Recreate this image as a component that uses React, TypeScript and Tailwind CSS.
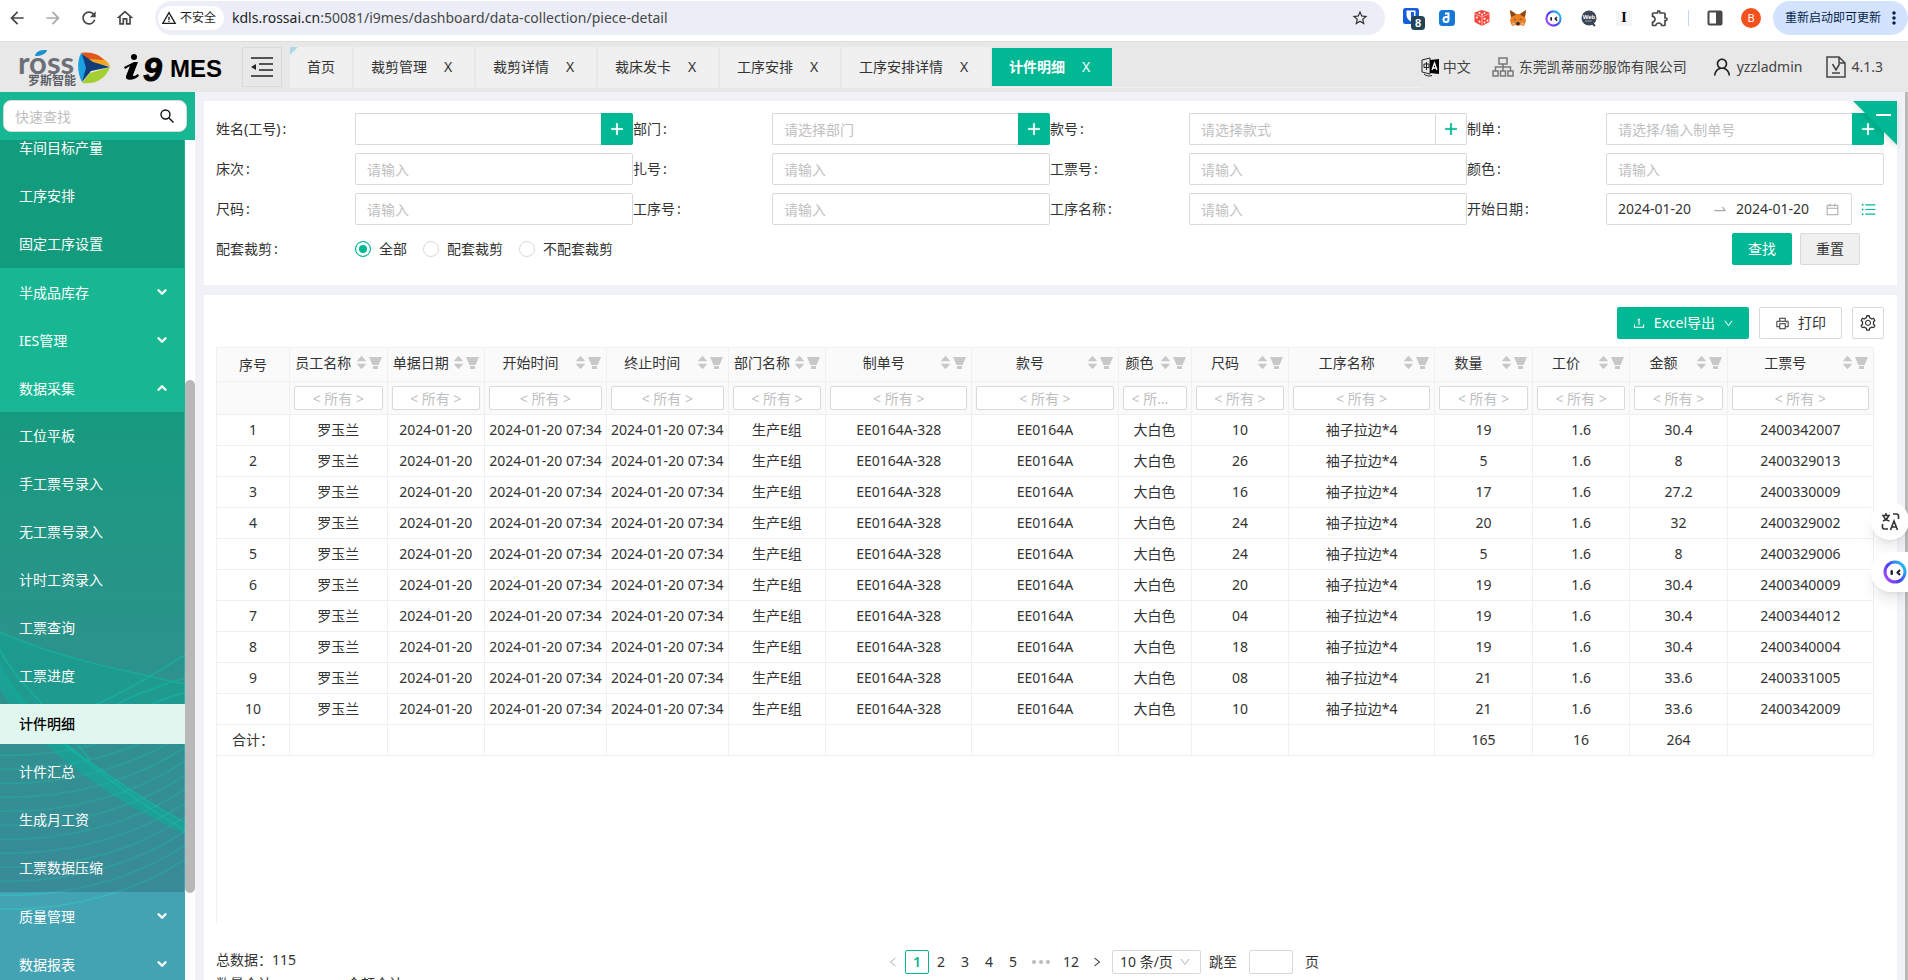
import React, { useId, useState } from 'react';
import clsx from 'clsx';
import {
    AiFillCaretDown,
    AiFillCaretUp,
    AiOutlineCalendar,
    AiOutlineDown,
    AiOutlineLeft,
    AiOutlinePlus,
    AiOutlinePrinter,
    AiOutlineRight,
    AiOutlineSetting,
    AiOutlineSwapRight,
    AiOutlineUnorderedList,
    AiOutlineUpload,
    AiOutlineUser,
} from 'react-icons/ai';
import { MdArrowBack, MdArrowForward, MdMoreVert, MdOutlineExtension, MdOutlineHome, MdRefresh, MdStarBorder, MdWarningAmber } from 'react-icons/md';
import { ChevronDown, ChevronUp } from 'lucide-react';

interface MenuItem {
    title: string;
    open?: boolean;
    children?: string[];
}

interface Column {
    title: string;
    width: string;
}

const TABS = ['首页', '裁剪管理', '裁剪详情', '裁床发卡', '工序安排', '工序安排详情', '计件明细'];

const MENU: MenuItem[] = [
    { title: '半成品库存' },
    { title: 'IES管理' },
    {
        title: '数据采集',
        open: true,
        children: ['工位平板', '手工票号录入', '无工票号录入', '计时工资录入', '工票查询', '工票进度', '计件明细', '计件汇总', '生成月工资', '工票数据压缩'],
    },
    { title: '质量管理' },
    { title: '数据报表' },
];

const COLUMNS: Column[] = [
    { title: '员工名称', width: 'w-[80px]' },
    { title: '单据日期', width: 'w-[80px]' },
    { title: '开始时间', width: 'w-[100px]' },
    { title: '终止时间', width: 'w-[100px]' },
    { title: '部门名称', width: 'w-[80px]' },
    { title: '制单号', width: 'w-[120px]' },
    { title: '款号', width: 'w-[120px]' },
    { title: '颜色', width: 'w-[60px]' },
    { title: '尺码', width: 'w-[80px]' },
    { title: '工序名称', width: 'w-[120px]' },
    { title: '数量', width: 'w-[80px]' },
    { title: '工价', width: 'w-[80px]' },
    { title: '金额', width: 'w-[80px]' },
    { title: '工票号', width: 'w-[120px]' },
];

// size, quantity, amount, ticket number
const RECORDS = [
    ['10', '19', '30.4', '2400342007'],
    ['26', '5', '8', '2400329013'],
    ['16', '17', '27.2', '2400330009'],
    ['24', '20', '32', '2400329002'],
    ['24', '5', '8', '2400329006'],
    ['20', '19', '30.4', '2400340009'],
    ['04', '19', '30.4', '2400344012'],
    ['18', '19', '30.4', '2400340004'],
    ['08', '21', '33.6', '2400331005'],
    ['10', '21', '33.6', '2400342009'],
];

const ROWS = RECORDS.map(([size, qty, amount, ticket]) => [
    '罗玉兰', '2024-01-20', '2024-01-20 07:34', '2024-01-20 07:34', '生产E组', 'EE0164A-328', 'EE0164A', '大白色',
    size, '袖子拉边*4', qty, '1.6', amount, ticket,
]);

const TOTALS = ['', '', '', '', '', '', '', '', '', '', '165', '16', '264', ''];

const RobotIcon = ({ size }: { size: number }) => (
    <svg width={size} height={size} viewBox="0 0 24 24">
        <defs>
            <linearGradient id={`ring${size}`} x1="0" y1="1" x2="1" y2="0.3">
                <stop offset="0" stopColor="#c04dff" />
                <stop offset="0.5" stopColor="#4a3df5" />
                <stop offset="1" stopColor="#27b9ee" />
            </linearGradient>
        </defs>
        <circle cx="12" cy="12" r="10" fill="#fff" stroke={`url(#ring${size})`} strokeWidth="3" />
        <rect x="7.5" y="10" width="2.4" height="5" rx="1" fill="#1b1b2a" />
        <path d="M17 10l-2.500 2.500 2.500 2.500" fill="none" stroke="#1b1b2a" strokeWidth="2" />
    </svg>
);

const Extensions = () => (
    <div className="flex items-center gap-[18px] pl-[18px]">
        <svg width="22" height="24" viewBox="0 0 22 24">
            <rect x="0" y="2" width="16" height="16" rx="2.5" fill="#175ddc" />
            <path d="M3.5 4.5h9v5c0 3-2.5 5-4.500 6-2-1-4.500-3-4.500-6z" fill="#fff" />
            <path d="M8 6h3v3.500c0 2-1.500 3.200-3 4z" fill="#175ddc" />
            <rect x="8" y="10" width="14" height="14" rx="3.5" fill="#254453" />
            <text x="15" y="21" textAnchor="middle" fontSize="11" fontWeight="700" fill="#fff" fontFamily="Liberation Sans">8</text>
        </svg>
        <svg className="-ml-1" width="16" height="16" viewBox="0 0 16 16">
            <rect width="16" height="16" rx="3.5" fill="#1478d4" />
            <path d="M6 3.500h3.500v6a2.500 2.500 0 1 1-2.500-2.500h2" fill="none" stroke="#fff" strokeWidth="2" />
        </svg>
        <svg width="18" height="18" viewBox="0 0 18 18">
            <path d="M9 1l7.500 2.500v9.500L9 17l-7.500-4V3.500z" fill="#f5473c" />
            <path d="M1.500 4.500L9 8l7.500-3.500M9 8v9" stroke="#ffd8d4" strokeWidth="0.700" fill="none" />
            <g fill="#fff">
                <circle cx="6.500" cy="4" r="0.900" /><circle cx="11.500" cy="4" r="0.900" /><circle cx="9" cy="5.500" r="0.900" />
                <circle cx="4" cy="8.500" r="1" /><circle cx="6.500" cy="12.500" r="1" />
                <circle cx="11.500" cy="9.800" r="1" /><circle cx="14.500" cy="11.500" r="1" /><circle cx="11.500" cy="13.500" r="0.900" />
            </g>
        </svg>
        <svg width="18" height="18" viewBox="0 0 18 18">
            <path d="M1 1l6 4h4l6-4-1 7 1 4-2 5-4-1-1 1H8l-1-1-4 1-2-5 1-4z" fill="#ec7f24" />
            <path d="M1 1l6 4-2 2-3 1zM17 1l-6 4 2 2 3 1z" fill="#8a4718" />
            <path d="M5 9.500l2.500 1.500-2-.2zM13 9.500L10.500 11l2-.2z" fill="#233447" />
            <path d="M7 15l1-2h2l1 2-1 1H8z" fill="#233447" />
            <path d="M3.500 13l3 2-3 1zM14.500 13l-3 2 3 1z" fill="#d7c1b3" />
        </svg>
        <RobotIcon size={17} />
        <svg width="18" height="18" viewBox="0 0 18 18">
            <circle cx="9" cy="9" r="7.500" fill="#3d4654" />
            <text x="9" y="10" textAnchor="middle" fontSize="6" fontWeight="700" fill="#fff" fontFamily="Liberation Sans">Web</text>
            <path d="M5 12h7" stroke="#8fa3c0" />
            <path d="M11 13l4 4" stroke="#3d4654" strokeWidth="2" />
        </svg>
        <span className="w-[16px] h-[16px] bg-[#f5f5f5] flex items-center justify-center font-['Liberation_Serif',serif] font-bold text-[14px] leading-[16px] text-black">I</span>
        <MdOutlineExtension size={20} className="text-[#474747]" />
        <span className="w-px h-4 bg-[#c2d7fb]" />
        <svg width="16" height="16" viewBox="0 0 16 16">
            <rect x="1.500" y="1.500" width="13" height="13" rx="1" fill="none" stroke="#474747" strokeWidth="2" />
            <rect x="9" y="2" width="6" height="12" fill="#474747" />
        </svg>
        <span className="w-5 h-5 rounded-full bg-[#f4511e] text-white text-[11px] leading-5 text-center">B</span>
    </div>
);

const BrowserBar = () => (
    <div className="h-[41px] shrink-0 bg-white flex items-start pt-px">
        <div className="h-[34px] w-[155px] shrink-0 flex items-center gap-4 pl-[7px] text-[#474747]">
            <button title="后退"><MdArrowBack size={20} /></button>
            <button title="前进" className="text-[#a9a9a9]"><MdArrowForward size={20} /></button>
            <button title="刷新"><MdRefresh size={20} /></button>
            <button title="主页"><MdOutlineHome size={20} /></button>
        </div>
        <div className="h-[34px] flex-1 rounded-full bg-[#ebeef7] flex items-center pl-[3px] pr-4">
            <span className="h-6 rounded-full bg-white flex items-center gap-[3px] pl-[3px] pr-2 text-[12px] leading-[16px] text-[#1f1f1f]">
                <MdWarningAmber size={16} />不安全
            </span>
            <span className="flex-1 pl-2 text-[14px] leading-[20px] text-[#474747]">
                <span className="text-[#1f1f1f]">kdls.rossai.cn</span>:50081/i9mes/dashboard/data-collection/piece-detail
            </span>
            <MdStarBorder size={18} className="text-[#333]" />
        </div>
        <div className="h-[34px] flex items-center">
            <Extensions />
        </div>
        <button className="ml-3 h-[34px] rounded-full bg-[#d3e3fd] flex items-center pl-3 pr-1 text-[12px] leading-[16px] text-[#041e49]">
            重新启动即可更新<MdMoreVert size={20} className="ml-[3px]" />
        </button>
    </div>
);

const Logo = () => (
    <svg className="shrink-0" width="224" height="50" viewBox="0 0 224 50">
        <text x="18" y="32" fontSize="31" fontWeight="700" fill="#6c6f76" fontFamily="Lato">ross</text>
        <path d="M35 14c1-5 5-6 12-6-1 4-6 6-12 6z" fill="#1a8fd1" />
        <text x="28" y="43" fontSize="12" fontWeight="700" fill="#5b5e66" fontFamily="Noto Sans CJK SC">罗斯智能</text>
        <path d="M81 11c2-2 24 2 29 13L93 21z" fill="#f5a623" />
        <path d="M81 11c9-2 18 1 23 7L88 17z" fill="#e0561d" />
        <path d="M81 11c-4 8-4 20 1 29l7-19z" fill="#1ba0e2" />
        <path d="M82 41c14 2 24-5 28-16L90 31z" fill="#a4cf30" />
        <path d="M82 12l11 8 17 5-19 4-9 11 4-14z" fill="#123c78" />
        <circle cx="134" cy="15" r="3" fill="#000" />
        <path d="M124 25l10-5h4l-5 13c0 2 2 1 5-1l1 2c-4 4-14 6-13 0l4-10-5 3z" fill="#000" />
        <text x="143" y="39" fontSize="34" fontWeight="700" fontStyle="italic" fill="#000" stroke="#000" fontFamily="Liberation Sans">9</text>
        <text x="170" y="35" fontSize="24" fontWeight="700" fill="#000" fontFamily="Liberation Sans">MES</text>
    </svg>
);

const Header = () => (
    <header className="h-[51px] shrink-0 bg-[#e8e8e8] border-t border-[#dedede] flex items-center pr-[25px]">
        <Logo />
        <button title="收起菜单" className="ml-[18px] w-10 h-10 shrink-0 border border-[#d9d9d9] flex items-center justify-center">
            <svg width="24" height="22" viewBox="0 0 24 22" stroke="#222" strokeWidth="1.500">
                <path d="M1 2h22M9 8h14M9 14h14M1 20h22" />
                <path d="M6 8v6l-5-3z" fill="#222" stroke="none" />
            </svg>
        </button>
        <nav className="ml-2 flex-1 flex items-center gap-[2px] border-b border-[#f0f0f0]">
            {TABS.map((tab, i) => {
                const active = i === TABS.length - 1;
                return (
                    <div
                        key={tab}
                        className={clsx(
                            'relative flex items-center px-[17px] text-[14px] leading-[20px]',
                            active ? 'h-[38px] bg-[#00b894] text-white font-bold' : 'h-10 bg-[#f0f0f0] text-[#333]'
                        )}
                    >
                        {i === 0 && <span className="absolute left-0 top-0 border-t-8 border-r-8 border-t-[#add8e6] border-r-transparent" />}
                        <a href="#">{tab}</a>
                        {i > 0 && <button title="关闭" className="ml-4 mr-1 w-[10px] font-normal">X</button>}
                    </div>
                );
            })}
        </nav>
        <div className="flex items-center text-[14px] leading-[20px] text-[#444] whitespace-nowrap">
            <svg className="mr-[3px]" width="19" height="20" viewBox="0 0 19 20">
                <path d="M1 3l8-2v16l-8-2z" fill="none" stroke="#222" />
                <path d="M3 7h5v3.500H3zM5.500 5v8" fill="none" stroke="#222" />
                <path d="M9 3l9-1v15l-9-1z" fill="#000" />
                <path d="M11 13l2.500-7L16 13M12 11h3" fill="none" stroke="#fff" strokeWidth="1.300" />
                <path d="M3 17c2 2 5 2.500 8 1.500" fill="none" stroke="#222" />
            </svg>
            <span>中文</span>
            <svg className="ml-[21px] mr-[5px]" width="22" height="20" viewBox="0 0 22 20" fill="none" stroke="#777" strokeWidth="1.500">
                <path d="M7 1h8v6H7zM1 14h5v5H1zM8.500 14h5v5h-5zM16 14h5v5h-5zM11 7v7M3.500 14v-4h15v4" />
            </svg>
            <span>东莞凯蒂丽莎服饰有限公司</span>
            <AiOutlineUser size={22} className="ml-6 mr-1 text-[#222]" />
            <span>yzzladmin</span>
            <svg className="ml-6 mr-[5px]" width="20" height="22" viewBox="0 0 20 22" fill="none" stroke="#444" strokeWidth="1.500">
                <path d="M1 1h12l6 6v14H1zM13 1v6h6M6.500 8l3.500 6 3.500-6M6 17h8" />
            </svg>
            <span>4.1.3</span>
        </div>
    </header>
);

const SidebarWaves = () => (
    <svg className="absolute bottom-0 left-0 w-full h-[380px]" viewBox="0 0 185 380" preserveAspectRatio="none" fill="none">
        <path d="M0 32C50 55 110 68 185 84V104H20C10 90 4 78 0 60z" fill="#10c4ac" opacity="0.45" />
        <path d="M0 62C20 110 90 170 185 222V234C90 190 20 130 0 88z" fill="#12c9b6" opacity="0.6" />
        <g stroke="#1ad6c0" strokeWidth="1.500" opacity="0.7">
            <path d="M0 32C50 55 110 68 185 84" />
            <path d="M95 105C130 90 160 70 185 55" />
            <path d="M115 105C140 92 165 84 185 78" />
            <path d="M150 105C165 98 178 95 185 92" />
            <path d="M40 125C90 165 140 205 185 230" />
            <path d="M60 140C100 170 150 205 185 222" />
            <path d="M0 50C15 80 60 120 90 160" />
        </g>
        <g stroke="#2fd0c4" strokeWidth="2" opacity="0.4">
            {[0, 1, 2, 3, 4, 5, 6, 7, 8, 9, 10, 11].map((n) => (
                <path key={n} transform={`translate(0 ${n * 14})`} d="M0 155C60 157 130 142 185 105" />
            ))}
        </g>
    </svg>
);

const SubMenu = ({ items }: { items: string[] }) => (
    <ul className="mr-px bg-black/15">
        {items.map((item) => (
            <li key={item} className="py-1 -mr-px">
                <a
                    href="#"
                    className={clsx('block h-10 pl-[19px] leading-[40px]', item === '计件明细' && 'bg-[#e0f7ef] text-black font-medium')}
                >
                    {item}
                </a>
            </li>
        ))}
    </ul>
);

const Sidebar = () => (
    <aside className="w-[195px] shrink-0 flex flex-col">
        <div className="h-12 shrink-0 bg-[#17b794] pl-[3px] pr-2 flex items-center">
            <label className="h-8 w-full rounded-lg border border-[#d9d9d9] bg-white flex items-center pl-[11px] pr-3">
                <input aria-label="快速查找" placeholder="快速查找" className="flex-1 min-w-0 outline-none text-[14px] placeholder:text-[#bfbfbf]" />
                <svg width="14" height="14" viewBox="0 0 14 14" fill="none" stroke="#111" strokeWidth="1.400">
                    <circle cx="5.500" cy="5.500" r="4.500" />
                    <path d="M9 9l4.500 4.500" />
                </svg>
            </label>
        </div>
        <div className="flex-1 min-h-0 flex">
            <nav className="relative w-[185px] overflow-hidden bg-linear-to-b from-[#17b794] from-30% to-[#43a3b3] to-90% text-white text-[14px]">
                <SidebarWaves />
                <div className="relative -mt-4">
                    <SubMenu items={['车间目标产量', '工序安排', '固定工序设置']} />
                    {MENU.map((item) => (
                        <React.Fragment key={item.title}>
                            <button className="w-full h-12 pl-[19px] pr-4 flex items-center justify-between text-left">
                                {item.title}
                                {item.open ? <ChevronUp size={14} strokeWidth={4} /> : <ChevronDown size={14} strokeWidth={4} />}
                            </button>
                            {item.children && <SubMenu items={item.children} />}
                        </React.Fragment>
                    ))}
                </div>
            </nav>
            <div className="w-[10px] bg-white pt-[240px]">
                <div className="h-[513px] rounded-full bg-[#b8b8b8]" />
            </div>
        </div>
    </aside>
);

interface FieldProps {
    label: string;
    placeholder?: string;
    plus?: 'solid' | 'outline';
}

const Field: React.FC<FieldProps> = ({ label, placeholder = '请输入', plus }) => {
    const id = useId();
    return (
        <div className="grid grid-cols-3 items-center">
            <label htmlFor={id}>{label}<span className="ml-[2px]">:</span></label>
            <div className="col-span-2 flex">
                <input
                    id={id}
                    placeholder={placeholder}
                    className={clsx(
                        'h-8 flex-1 min-w-0 border border-[#d9d9d9] bg-white px-[11px] outline-none placeholder:text-[#bfbfbf]',
                        plus ? 'rounded-l-xs border-r-0' : 'rounded-xs'
                    )}
                />
                {plus && (
                    <button
                        type="button"
                        title="选择"
                        className={clsx(
                            'h-8 w-8 rounded-r-xs flex items-center justify-center',
                            plus === 'solid' ? 'bg-[#00b894] text-white' : 'border border-[#d9d9d9] bg-white text-[#00b894]'
                        )}
                    >
                        <AiOutlinePlus size={16} stroke="currentColor" strokeWidth={50} />
                    </button>
                )}
            </div>
        </div>
    );
};

const SearchForm = () => {
    const [cutting, setCutting] = useState('全部');

    return (
        <form className="relative shrink-0 bg-white pl-3 pr-[13px] pt-3 pb-5 text-[14px] leading-[20px] text-[#333]" onSubmit={(e) => e.preventDefault()}>
            <div className="grid grid-cols-4 gap-y-2">
                <Field label="姓名(工号)" placeholder="" plus="solid" />
                <Field label="部门" placeholder="请选择部门" plus="solid" />
                <Field label="款号" placeholder="请选择款式" plus="outline" />
                <Field label="制单" placeholder="请选择/输入制单号" plus="solid" />
                <Field label="床次" />
                <Field label="扎号" />
                <Field label="工票号" />
                <Field label="颜色" />
                <Field label="尺码" />
                <Field label="工序号" />
                <Field label="工序名称" />
                <div className="grid grid-cols-3 items-center">
                    <label htmlFor="date-start">开始日期<span className="ml-[2px]">:</span></label>
                    <div className="col-span-2 flex items-center">
                        <div className="h-8 flex-1 min-w-0 rounded-xs border border-[#d9d9d9] px-[11px] flex items-center">
                            <input id="date-start" defaultValue="2024-01-20" className="flex-1 min-w-0 outline-none" />
                            <AiOutlineSwapRight size={16} className="mx-2 text-[#aaa]" />
                            <input aria-label="结束日期" defaultValue="2024-01-20" className="w-[89px] outline-none" />
                            <AiOutlineCalendar size={15} className="text-[#aaa]" />
                        </div>
                        <button type="button" title="快捷选择" className="w-8 flex justify-center text-[#00b894]"><AiOutlineUnorderedList size={17} /></button>
                    </div>
                </div>
                <fieldset className="col-span-3 grid grid-cols-9 items-center">
                    <span>配套裁剪<span className="ml-[2px]">:</span></span>
                    <div className="col-span-8 flex items-center gap-4">
                        {['全部', '配套裁剪', '不配套裁剪'].map((name) => (
                            <label key={name} className="flex items-center gap-2">
                                <input
                                    type="radio"
                                    name="cutting"
                                    checked={cutting === name}
                                    onChange={() => setCutting(name)}
                                    className="appearance-none w-4 h-4 rounded-full border border-[#d9d9d9] checked:border-[#00b894] checked:bg-[#00b894] checked:shadow-[inset_0_0_0_3px_#fff]"
                                />
                                {name}
                            </label>
                        ))}
                    </div>
                </fieldset>
                <div className="flex justify-end gap-2 pr-6">
                    <button className="w-[60px] h-8 rounded-xs bg-[#00b894] text-white">查找</button>
                    <button type="reset" className="w-[60px] h-8 rounded-xs border border-[#d9d9d9] bg-[#f0f0f0]">重置</button>
                </div>
            </div>
            <button type="button" title="收起" className="absolute right-0 top-0 drop-shadow-md">
                <svg width="44" height="44" viewBox="0 0 44 44">
                    <path d="M0 0h44v44z" fill="#00b894" />
                    <path d="M23 14h15" stroke="#fff" strokeWidth="2" />
                </svg>
            </button>
        </form>
    );
};

const PieceTable = () => (
    <table className="w-full table-fixed border-collapse text-[14px] leading-[20px] text-[#333] [&_td]:border [&_td]:border-[#f0f0f0] [&_th]:border [&_th]:border-[#f0f0f0]">
        <colgroup>
            <col className="w-[60px]" />
            {COLUMNS.map((col) => <col key={col.title} className={col.width} />)}
        </colgroup>
        <thead className="bg-[#fafafa]">
            <tr className="h-[34px]">
                <th className="p-0 font-normal">序号</th>
                {COLUMNS.map((col) => (
                    <th key={col.title} className="p-0 font-normal">
                        <div className="flex items-center pl-[2px] pr-[5px] pb-1">
                            <span className="flex-1 whitespace-nowrap">{col.title}</span>
                            <span className="mr-px flex flex-col items-center text-[#c8c8c8]">
                                <AiFillCaretUp size={13} className="-mb-[3px]" />
                                <AiFillCaretDown size={13} className="-mt-[2px]" />
                            </span>
                            <svg width="13" height="14" viewBox="0 0 13 14" fill="#c8c8c8">
                                <path d="M0 1h13L9.500 9h-6z" />
                                <path d="M4 10h5v3H4z" />
                            </svg>
                        </div>
                    </th>
                ))}
            </tr>
            <tr className="h-[33px]">
                <td className="p-0" />
                {COLUMNS.map((col) => (
                    <td key={col.title} className="py-0 px-1">
                        <input
                            aria-label={col.title}
                            placeholder="< 所有 >"
                            className="block w-full h-6 rounded-xs border border-[#d9d9d9] bg-white px-2 text-center text-ellipsis outline-none placeholder:text-[#bfbfbf]"
                        />
                    </td>
                ))}
            </tr>
        </thead>
        <tbody className="text-center">
            {ROWS.map((row, i) => (
                <tr key={i} className="h-[31px]">
                    <td className="p-0">{i + 1}</td>
                    {row.map((cell, j) => <td key={j} className="p-0 whitespace-nowrap">{cell}</td>)}
                </tr>
            ))}
        </tbody>
        <tfoot className="text-center">
            <tr className="h-[31px]">
                <td className="p-0">合计：</td>
                {TOTALS.map((cell, j) => <td key={j} className="p-0">{cell}</td>)}
            </tr>
        </tfoot>
    </table>
);

const Pagination = () => (
    <div className="h-6 flex items-center">
        <button title="上一页" className="w-6 flex justify-center text-[#bbb]"><AiOutlineLeft size={12} /></button>
        {[1, 2, 3, 4, 5].map((page) => (
            <button
                key={page}
                className={clsx('w-6 h-6 leading-[22px]', page === 1 && 'rounded-xs border border-[#00b894] text-[#00b894] font-semibold')}
            >
                {page}
            </button>
        ))}
        <span className="w-8 flex justify-center gap-[3px]">
            <i className="w-1 h-1 rounded-full bg-[#bbb]" />
            <i className="w-1 h-1 rounded-full bg-[#bbb]" />
            <i className="w-1 h-1 rounded-full bg-[#bbb]" />
        </span>
        <button className="w-7">12</button>
        <button title="下一页" className="w-6 flex justify-center"><AiOutlineRight size={12} /></button>
        <div className="relative ml-[3px]">
            <select aria-label="每页条数" className="appearance-none block w-[89px] h-6 rounded-xs border border-[#d9d9d9] bg-white pl-[7px] outline-none">
                <option>10 条/页</option>
            </select>
            <AiOutlineDown size={12} className="absolute right-[10px] top-[6px] text-[#bbb] pointer-events-none" />
        </div>
        <label className="ml-2 flex items-center">
            跳至
            <input className="mx-3 w-11 h-6 rounded-xs border border-[#d9d9d9] outline-none" />
            页
        </label>
    </div>
);

const FloatingTools = () => (
    <div className="absolute right-0 top-[410px] flex flex-col items-end gap-3">
        <button title="翻译" className="w-[38px] h-[38px] -mr-px rounded-full bg-white shadow-lg flex items-center justify-center">
            <svg width="19" height="19" viewBox="0 0 19 19" fill="none" stroke="#333" strokeWidth="1.600">
                <path d="M1 3.500h8M5 1v2.500M2 9c3-1 5-3 5.500-5.500M2.500 4C3.500 6.500 6 8.500 8.500 9" />
                <path d="M12 2h3.500a2 2 0 0 1 2 2v3M1.500 12v3a2 2 0 0 0 2 2H7" />
                <path d="M9.500 18l3.500-9 3.500 9M10.800 15h4.500" />
            </svg>
        </button>
        <button title="助手" className="w-[37px] h-10 rounded-l-full bg-white shadow-lg flex items-center justify-end pr-px">
            <RobotIcon size={24} />
        </button>
    </div>
);

export default function App() {
    return (
        <div className="h-screen flex flex-col overflow-hidden bg-white font-['Noto_Sans','Noto_Sans_CJK_SC',sans-serif]">
            <BrowserBar />
            <Header />
            <div className="relative flex-1 min-h-0 flex">
                <Sidebar />
                <main className="flex-1 min-w-0 bg-[#f0f2f7] flex flex-col gap-[10px] pt-[9px] pl-[9px] pr-2">
                    <SearchForm />
                    <section className="flex-1 min-h-0 bg-white pl-3 pr-[13px] pt-3 flex flex-col text-[14px] leading-[20px] text-[#333]">
                        <div className="flex justify-end gap-[10px] pb-2">
                            <button className="h-8 px-[15px] rounded-xs bg-[#00b894] text-white flex items-center">
                                <AiOutlineUpload size={14} className="mr-2" />Excel导出<AiOutlineDown size={11} className="ml-2" />
                            </button>
                            <button className="h-8 px-[15px] rounded-xs border border-[#d9d9d9] flex items-center gap-2">
                                <AiOutlinePrinter size={15} />打印
                            </button>
                            <button title="设置" className="w-8 h-8 rounded-xs border border-[#d9d9d9] flex items-center justify-center">
                                <AiOutlineSetting size={18} />
                            </button>
                        </div>
                        <div className="flex-1 min-h-0 mr-[10px] flex flex-col">
                            <PieceTable />
                            <div className="flex-1 border-l border-[#f0f0f0]" />
                        </div>
                        <footer className="h-14 shrink-0 overflow-hidden flex items-start">
                            <div className="w-[665px] shrink-0 pt-6 leading-[24px]">
                                <p>总数据：115</p>
                                <p className="flex"><span className="w-[131px]">数量合计：</span><span>金额合计：</span></p>
                            </div>
                            <div className="pt-[26px]"><Pagination /></div>
                        </footer>
                    </section>
                </main>
                <div className="w-[3px] shrink-0 bg-[#b8b8b8]" />
                <FloatingTools />
            </div>
        </div>
    );
}
